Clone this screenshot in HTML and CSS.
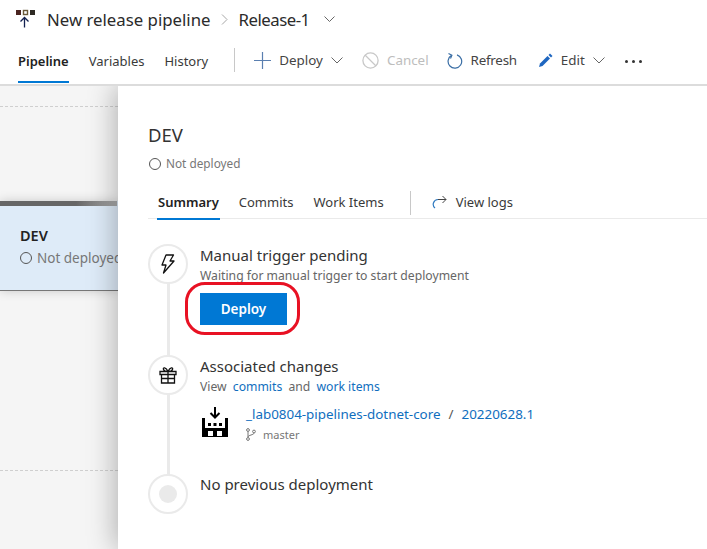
FILE: index.html
```html
<!DOCTYPE html>
<html lang="en">
<head>
    <meta charset="UTF-8">
    <title>Release-1</title>
    <link rel="stylesheet" href="styles.css">
</head>
<body>

<div class="page">
    <header class="top">
        <div class="title-row">
            <svg class="logo" width="20" height="20" viewBox="0 0 20 20">
                <rect x="0" y="1" width="5" height="5" fill="#4a2420"/>
                <rect x="7.500" y="1.500" width="4" height="4" fill="#fff" stroke="#6a5a3a" stroke-width="1.400"/>
                <rect x="14" y="1" width="5" height="5" fill="#2e2a24"/>
                <path d="M8.500 18.500V8.500M4.500 12.500l4-4 4 4" fill="none" stroke="#12204f" stroke-width="1.300"/>
            </svg>
            <span class="crumb">New release pipeline</span>
            <svg class="sep" width="7" height="11" viewBox="0 0 7 11"><path d="M1 .5l5 5-5 5" fill="none" stroke="#a6a6a6" stroke-width="1"/></svg>
            <span class="crumb crumb-release">Release-1</span>
            <svg class="chev chev-title" width="11" height="6" viewBox="0 0 11 6"><path d="M.5.500l5 5 5-5" fill="none" stroke="#666" stroke-width="1"/></svg>
        </div>
        <nav class="tool-row">
            <a class="tab tab-on">Pipeline</a>
            <a class="tab">Variables</a>
            <a class="tab">History</a>
            <span class="divider"></span>
            <a class="tool">
                <svg width="17" height="17" viewBox="0 0 17 17"><path d="M8.500 0v17M0 8.500h17" stroke="#5a7fb0" stroke-width="1.200" fill="none"/></svg>
                Deploy
                <svg class="chev" width="12" height="7" viewBox="0 0 12 7"><path d="M.5.500L6 6 11.500.5" fill="none" stroke="#666" stroke-width="1"/></svg>
            </a>
            <a class="tool tool-off">
                <svg width="17" height="17" viewBox="0 0 17 17"><circle cx="8.500" cy="8.500" r="7.600" fill="none" stroke="#c8c8c8" stroke-width="1.300"/><path d="M3 3l11 11" stroke="#c8c8c8" stroke-width="1.300"/></svg>
                Cancel
            </a>
            <a class="tool tool-refresh">
                <svg width="16" height="17" viewBox="0 0 16 17"><path d="M4.600 3.400A6.800 6.800 0 1 0 10 2.900" fill="none" stroke="#3a6ea5" stroke-width="1.200"/><path d="M1.500 1.400l3.400 1.900-1.400 3.200" fill="none" stroke="#3a6ea5" stroke-width="1.200"/></svg>
                Refresh
            </a>
            <a class="tool tool-edit">
                <svg width="15" height="15" viewBox="0 0 15 15"><path d="M1 14l1-3.500 7.500-7.500 2.500 2.500L4.500 13z" fill="#1e66c0"/><path d="M10.500 2l1.500-1.500 2.500 2.500L13 4.500z" fill="#1e66c0"/></svg>
                Edit
                <svg class="chev" width="12" height="7" viewBox="0 0 12 7"><path d="M.5.500L6 6 11.500.5" fill="none" stroke="#666" stroke-width="1"/></svg>
            </a>
            <span class="more"><i></i><i></i><i></i></span>
        </nav>
    </header>

    <main class="canvas">
        <div class="dash dash-top"></div>
        <div class="dash dash-bottom"></div>

        <div class="stage-card">
            <h3>DEV</h3>
            <p><span class="ring"></span>Not deployed</p>
        </div>

        <section class="panel">
            <h2>DEV</h2>
            <p class="status"><span class="ring"></span>Not deployed</p>

            <div class="subtabs">
                <a class="subtab subtab-on">Summary</a>
                <a class="subtab">Commits</a>
                <a class="subtab">Work Items</a>
                <span class="divider"></span>
                <a class="logs">
                    <svg width="15" height="14" viewBox="0 0 15 14"><path d="M6 4.500H14M10.500 1l3.500 3.500-3.500 3.500" fill="none" stroke="#444" stroke-width="1"/><path d="M6 4.500A4.800 4.800 0 0 0 3 13" fill="none" stroke="#2f7ac0" stroke-width="1.200"/></svg>
                    View logs
                </a>
            </div>

            <div class="steps">
                <div class="step">
                    <div class="bubble">
                        <svg width="14" height="20" viewBox="0 0 14 20"><path d="M5 1h7.500L9 7h4L2.500 19 5 11H1z" fill="none" stroke="#111" stroke-width="1.300" stroke-linejoin="round"/></svg>
                    </div>
                    <div class="step-body">
                        <div class="step-title">Manual trigger pending</div>
                        <div class="step-sub">Waiting for manual trigger to start deployment</div>
                        <div class="deploy-wrap">
                            <button class="deploy-btn">Deploy</button>
                        </div>
                    </div>
                </div>

                <div class="step step-changes">
                    <div class="bubble">
                        <svg width="18" height="18" viewBox="0 0 18 18"><path d="M1 5.500h16v3H1zM2.500 8.500h13v8.500h-13zM9 5.500V17M2.500 12.500h13M9 5.500C7 1 3.500 1 4.500 3.500 5 5 7 5.500 9 5.500zM9 5.500c2-4.500 5.500-4.500 4.500-2C13 5 11 5.500 9 5.500z" fill="none" stroke="#111" stroke-width="1.300"/></svg>
                    </div>
                    <div class="step-body">
                        <div class="step-title">Associated changes</div>
                        <div class="step-sub">View <a>commits</a> and <a>work items</a></div>
                        <div class="artifact">
                            <svg class="artifact-icon" width="26" height="30" viewBox="0 0 26 30">
                                <path d="M13 0v10M8.500 6l4.500 4.500L17.500 6" fill="none" stroke="#000" stroke-width="2"/>
                                <path d="M0 11h3v10h20V11h3v19H0z" fill="#000"/>
                                <path d="M6 16h3v3H6zM11.500 16h3v3h-3zM17 16h3v3h-3z" fill="#000"/>
                                <path d="M6 24h5v5H6zM15 24h5v5h-5z" fill="#fff"/>
                            </svg>
                            <div>
                                <div class="artifact-links"><a>_lab0804-pipelines-dotnet-core</a><span>/</span><a>20220628.1</a></div>
                                <div class="branch">
                                    <svg width="10" height="13" viewBox="0 0 10 13"><circle cx="2" cy="2" r="1.400" fill="none" stroke="#777"/><circle cx="2" cy="11" r="1.400" fill="none" stroke="#777"/><circle cx="8" cy="3.500" r="1.400" fill="none" stroke="#777"/><path d="M2 3.500v6M8 5c0 2-6 2-6 4" fill="none" stroke="#777"/></svg>
                                    master
                                </div>
                            </div>
                        </div>
                    </div>
                </div>

                <div class="step step-last">
                    <div class="bubble"><span class="dot"></span></div>
                    <div class="step-body">
                        <div class="step-title">No previous deployment</div>
                    </div>
                </div>
            </div>
        </section>
    </main>
</div>

</body>
</html>
```

FILE: styles.css
```css
* { box-sizing: border-box; }
html, body { margin: 0; height: 100%; overflow: hidden; }
body { font-family: "Noto Sans", "Open Sans", sans-serif; color: #333; background: #fff; }
a { color: inherit; text-decoration: none; }
p, h2, h3 { margin: 0; font-weight: 400; }

.page { display: flex; flex-direction: column; height: 549px; }

/* шапка */
.top { height: 86px; flex: none; border-bottom: 2px solid #dcdcdc; }
.title-row { display: flex; align-items: center; height: 38px; padding-left: 16px; }
.logo { margin-right: 11px; }
.crumb { font-size: 16.800px; color: #2b2b2b; }
.crumb-release { letter-spacing: -.5px; }
.sep { margin: 0 11px 0 10px; }
.chev-title { margin-left: 14px; }

.tool-row { display: flex; align-items: center; height: 46px; padding-left: 18px; font-size: 13px; }
.tab { height: 46px; line-height: 46px; margin-right: 20px; position: relative; color: #3a3a3a; }
.tab-on { font-weight: 600; color: #222; }
.tab-on::after { content: ""; position: absolute; left: 0; right: 0; bottom: 1px; height: 2px; background: #0078d4; }
.divider { width: 1px; height: 24px; background: #c8c8c8; }
.tool-row .divider { margin: 0 19px 2px 6px; }
.tool { display: flex; align-items: center; gap: 8px; margin: 0 19px 2px 0; font-size: 13.400px; color: #444; }
.tool-off { color: #bdbdbd; margin-right: 18px; }
.tool-refresh { margin-right: 21px; letter-spacing: -.25px; }
.tool-edit { margin-right: 20px; }
.more { display: flex; gap: 4px; }
.more i { width: 3px; height: 3px; border-radius: 50%; background: #333; }

/* холст */
.canvas { flex: 1; position: relative; background: #f5f5f5; overflow: hidden; }
.dash { position: absolute; left: 0; width: 118px; border-top: 1px dashed #cfcfcf; }
.dash-top { top: 20px; }
.dash-bottom { top: 384px; }

.stage-card { position: absolute; left: 0; top: 115px; width: 118px; height: 90px; background: #deebf8; border-bottom: 1px solid #777; padding: 24px 0 0 20px; white-space: nowrap; box-shadow: 0 0 10px rgba(0,0,0,.18); }
.stage-card::before { content: ""; position: absolute; left: 0; top: 0; width: 117px; height: 5px; background: linear-gradient(to right, #666 65%, #aaa); }
.stage-card h3 { font-size: 14.500px; font-weight: 600; color: #222; line-height: 20px; }
.stage-card p { font-size: 13.500px; color: #777; line-height: 18px; margin-top: 4px; display: flex; align-items: center; }

.ring { width: 12px; height: 12px; border: 1.500px solid #555; border-radius: 50%; margin-right: 5px; flex: none; }

/* боковая панель */
.panel { position: absolute; left: 118px; top: 0; bottom: 0; right: 0; background: #fff; box-shadow: -3px 0 26px rgba(0,0,0,.28); padding: 37px 0 0 30px; }
.panel h2 { font-size: 18.500px; line-height: 24px; color: #333; }
.status { display: flex; align-items: center; font-size: 11.800px; color: #777; margin: 8px 0 0 1px; line-height: 17px; }

.subtabs { display: flex; align-items: center; height: 32px; margin-top: 15px; border-bottom: 1px solid #eaeaea; font-size: 13px; color: #3a3a3a; padding-left: 10px; }
.subtab { height: 32px; line-height: 31px; margin-right: 20px; position: relative; }
.subtab-on { font-weight: 600; color: #222; }
.subtab-on::after { content: ""; position: absolute; left: -1px; right: -1px; bottom: -1px; height: 2px; background: #0078d4; }
.subtabs .divider { margin: 0 21px 0 6px; }
.logs { display: flex; align-items: center; gap: 9px; margin-bottom: 2px; }

/* шаги */
.steps { position: relative; margin-top: 25px; }
.steps::before { content: ""; position: absolute; left: 18.500px; top: 20px; height: 215px; width: 3px; background: #eaeaea; }
.step { display: flex; position: relative; }
.bubble { width: 40px; height: 40px; flex: none; border: 2px solid #eaeaea; border-radius: 50%; background: #fff; display: flex; align-items: center; justify-content: center; margin-right: 12px; }
.step-body { padding-top: 1px; }
.step-title { font-size: 15px; line-height: 20px; color: #333; }
.step-sub { font-size: 12.200px; line-height: 16px; color: #666; margin-top: 3px; }
.step-sub a { color: #106ebe; margin: 0 3px; }
.step-changes { margin-top: 30px; }
.step-last { margin-top: 32px; }
.step-last .step-body { padding-top: 0; }
.dot { width: 18px; height: 18px; border-radius: 50%; background: #eaeaea; }

.deploy-wrap { position: relative; width: 87px; margin-top: 9px; }
.deploy-btn { display: block; width: 87px; height: 32px; border: 0; padding: 0; background: #0078d4; color: #fff; font: 600 13.500px "Noto Sans", sans-serif; }
.deploy-wrap::after { content: ""; position: absolute; left: -15px; top: -11px; width: 109px; height: 47px; border: 3px solid #e81123; border-radius: 20px; }

.artifact { display: flex; margin-top: 12px; }
.artifact-icon { margin: 0 18px 0 2px; flex: none; }
.artifact-links { font-size: 13.400px; color: #106ebe; line-height: 18px; margin-top: -2px; white-space: nowrap; }
.artifact-links span { margin: 0 8px; color: #555; }
.branch { display: flex; align-items: center; gap: 7px; font-size: 11px; color: #777; margin-top: 4px; }
```
